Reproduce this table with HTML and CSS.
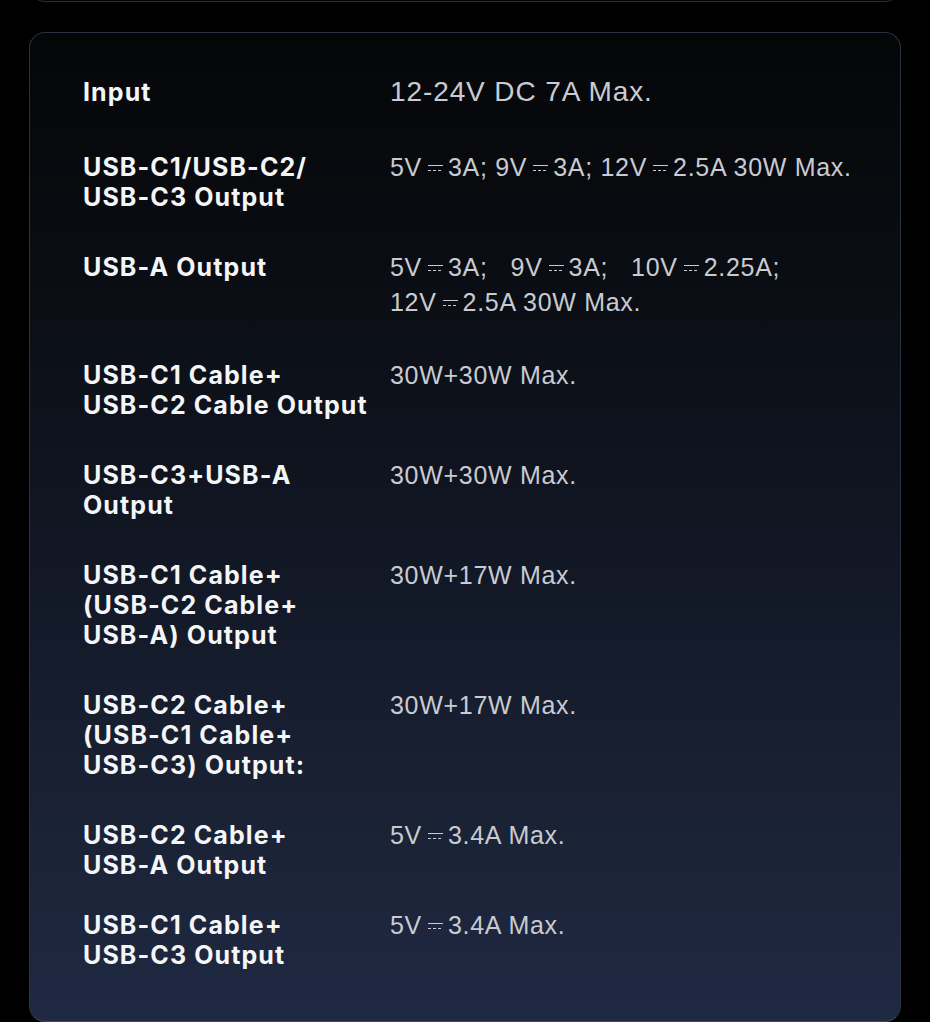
FILE: index.html
```html
<!DOCTYPE html>
<html lang="en">
<head>
<meta charset="utf-8">
<title>Specifications</title>
<link rel="stylesheet" href="styles.css">
</head>
<body>
<div class="page">
  <div class="prev-card"></div>
  <section class="spec-card">
    <div class="row row-first">
      <div class="label">Input</div>
      <div class="value value-big">12-24V DC 7A Max.</div>
    </div>
    <div class="row">
      <div class="label">USB-C1/USB-C2/<br>USB-C3 Output</div>
      <div class="value">5V<span class="dc"></span>3A; 9V<span class="dc"></span>3A; 12V<span class="dc"></span>2.5A 30W Max.</div>
    </div>
    <div class="row">
      <div class="label">USB-A Output</div>
      <div class="value">5V<span class="dc"></span>3A;&nbsp;&nbsp; 9V<span class="dc"></span>3A;&nbsp;&nbsp; 10V<span class="dc"></span>2.25A;<br>12V<span class="dc"></span>2.5A 30W Max.</div>
    </div>
    <div class="row">
      <div class="label">USB-C1 Cable+<br>USB-C2 Cable Output</div>
      <div class="value">30W+30W Max.</div>
    </div>
    <div class="row">
      <div class="label">USB-C3+USB-A<br>Output</div>
      <div class="value">30W+30W Max.</div>
    </div>
    <div class="row">
      <div class="label">USB-C1 Cable+<br>(USB-C2 Cable+<br>USB-A) Output</div>
      <div class="value">30W+17W Max.</div>
    </div>
    <div class="row">
      <div class="label">USB-C2 Cable+<br>(USB-C1 Cable+<br>USB-C3) Output:</div>
      <div class="value">30W+17W Max.</div>
    </div>
    <div class="row row-tight">
      <div class="label">USB-C2 Cable+<br>USB-A Output</div>
      <div class="value">5V<span class="dc"></span>3.4A Max.</div>
    </div>
    <div class="row">
      <div class="label">USB-C1 Cable+<br>USB-C3 Output</div>
      <div class="value">5V<span class="dc"></span>3.4A Max.</div>
    </div>
  </section>
</div>
</body>
</html>
```

FILE: styles.css
```css
html, body {
  margin: 0;
  padding: 0;
  background: #000;
}

.page {
  padding: 0 29px;
  height: 1022px;
  overflow: hidden;
}

.prev-card {
  height: 30px;
  margin-top: -29px;
  border: 1px solid #272d3a;
  border-top: none;
  border-radius: 0 0 16px 16px;
  background: #030305;
}

.spec-card {
  margin-top: 30px;
  border: 1.5px solid #2a3142;
  border-bottom-color: #3b4762;
  border-radius: 16px;
  background: linear-gradient(180deg, #050608 0%, #0a0d13 25%, #121826 55%, #1a2235 80%, #1f2942 100%);
  padding: 44px 30px 50px 53px;
  display: flex;
  flex-direction: column;
  height: 990px;
  box-sizing: border-box;
}

.row {
  display: flex;
  margin-bottom: 40px;
}

.row-first {
  margin-bottom: 43px;
}

.row-tight {
  margin-bottom: 30px;
}

.label {
  width: 307px;
  flex: none;
  font-family: Inter, "Open Sans", sans-serif;
  font-weight: 700;
  font-size: 25px;
  letter-spacing: 1.1px;
  line-height: 30px;
  color: #f4f5f7;
}

.value {
  font-family: "Liberation Sans", Arial, sans-serif;
  font-size: 25px;
  letter-spacing: 0.7px;
  line-height: 35px;
  color: #c8cbd1;
  margin-top: -2px;
}

.value-big {
  font-size: 28px;
  letter-spacing: 0.9px;
  margin-top: -3px;
}

.dc {
  display: inline-block;
  width: 15px;
  height: 6px;
  margin: 0 5px 0 6px;
  vertical-align: 5px;
  border-top: 1.5px solid #c8cbd1;
  background: repeating-linear-gradient(90deg, #c8cbd1 0 3px, transparent 3px 5px) bottom / 100% 1.5px no-repeat;
  box-sizing: border-box;
}
```
